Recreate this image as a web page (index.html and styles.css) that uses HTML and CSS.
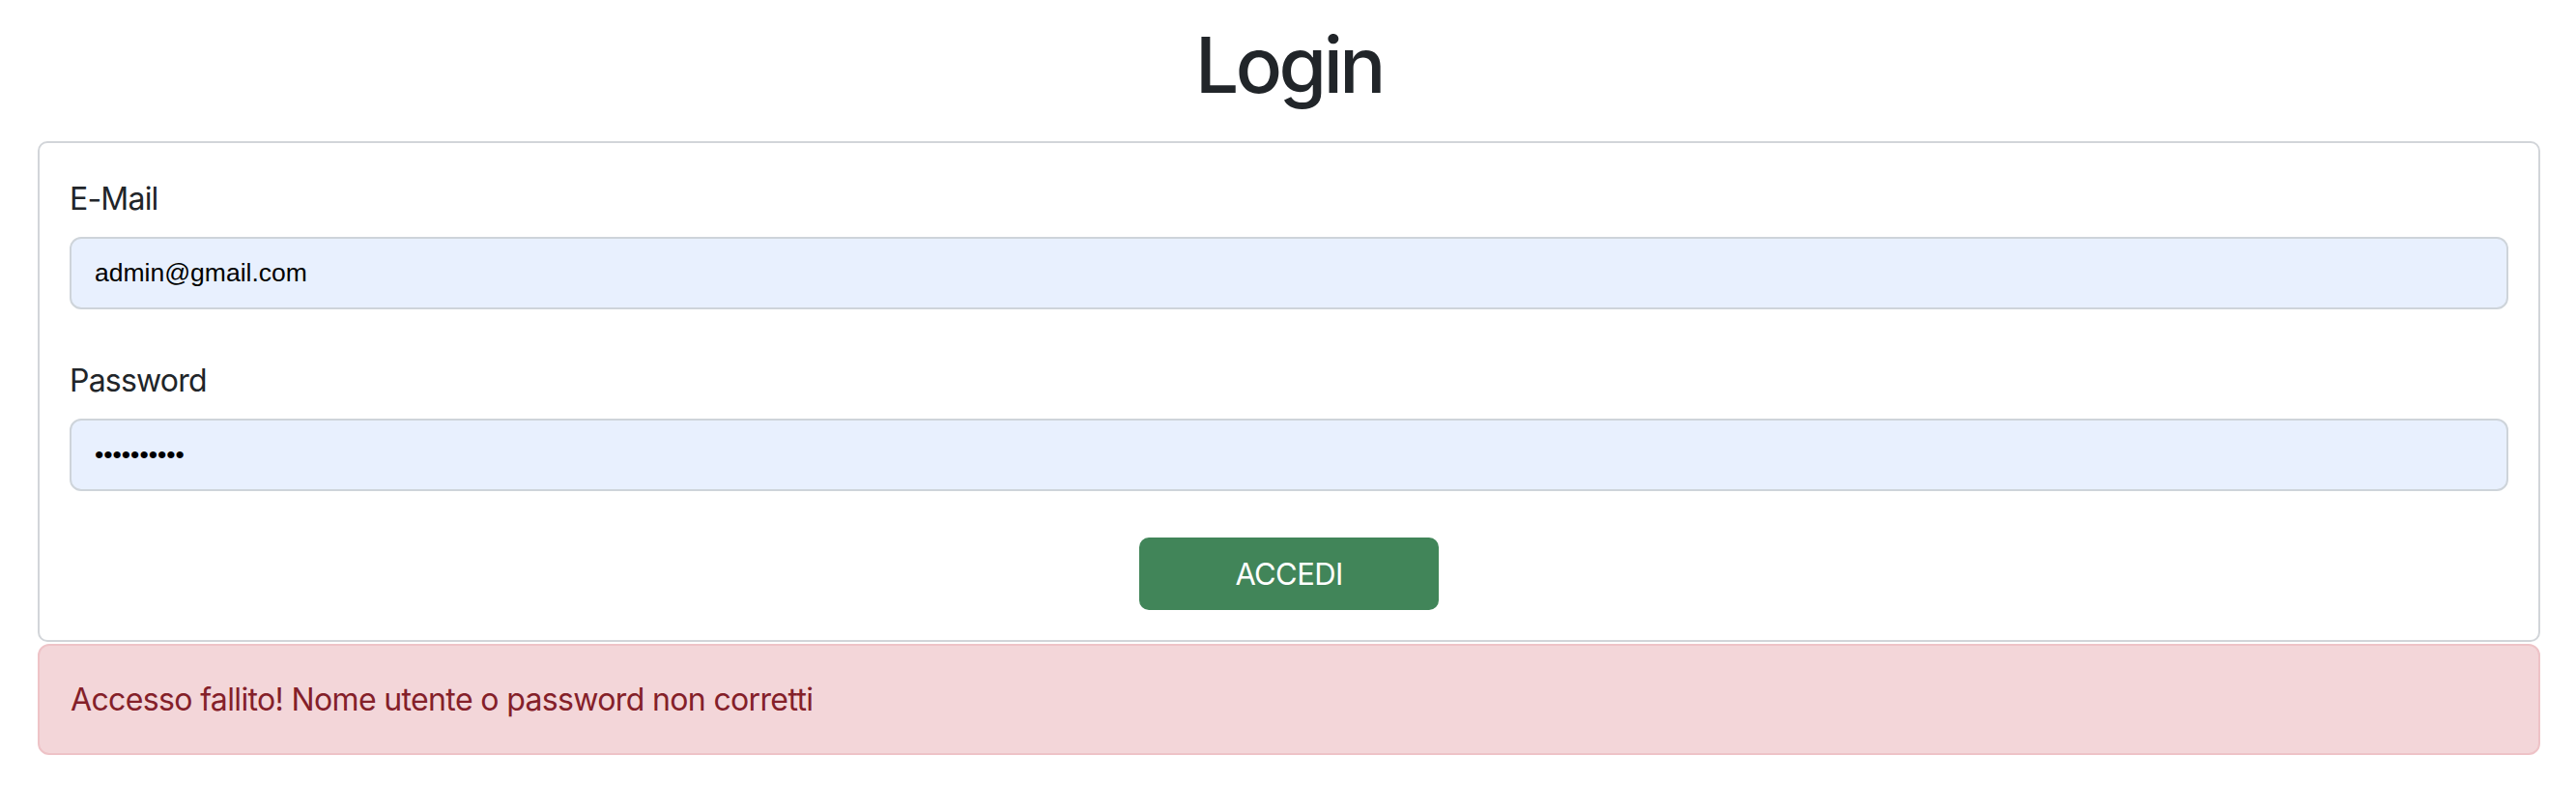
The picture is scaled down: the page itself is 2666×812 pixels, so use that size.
FILE: index.html
```html
<!DOCTYPE html>
<html lang="it">
<head>
<meta charset="utf-8">
<title>Login</title>
<link rel="stylesheet" href="styles.css">
</head>
<body>
<main class="page">
  <h1 class="title">Login</h1>
  <form class="card">
    <div class="field">
      <label class="label" for="email">E-Mail</label>
      <input class="control" id="email" type="text" value="admin@gmail.com">
    </div>
    <div class="field">
      <label class="label" for="pwd">Password</label>
      <input class="control" id="pwd" type="password" value="adminadmin">
    </div>
    <div class="actions">
      <button class="btn" type="button">ACCEDI</button>
    </div>
  </form>
  <div class="alert">Accesso fallito! Nome utente o password non corretti</div>
</main>
</body>
</html>
```

FILE: styles.css
```css
html, body {
  margin: 0;
  background: #ffffff;
}

.page {
  padding: 19px 37px 0 39px;
  font-family: Inter, "Noto Sans", sans-serif;
  color: #212529;
}

.title {
  margin: 0 0 31px;
  font-size: 80px;
  line-height: 96px;
  font-weight: 500;
  text-align: center;
  letter-spacing: -3.5px;
}

.card {
  display: flex;
  flex-direction: column;
  gap: 48px;
  border: 2px solid #d2d5d9;
  border-radius: 10px;
  padding: 32px 31px 31px;
  margin: 0;
}

.field {
  display: flex;
  flex-direction: column;
  gap: 15px;
}

.label {
  padding-top: 2px;
  font-size: 32px;
  line-height: 48px;
  font-weight: 400;
  letter-spacing: -0.025em;
  color: #212529;
}

.control {
  box-sizing: border-box;
  height: 75px;
  width: 100%;
  margin: 0;
  padding: 0 24px;
  border: 2px solid #ced4da;
  border-radius: 12px;
  background: #e8f0fe;
  font-family: "Liberation Sans", Arial, sans-serif;
  font-size: 26.5px;
  color: #000000;
  outline: none;
}

.actions {
  display: flex;
  justify-content: center;
}

.btn {
  width: 310px;
  height: 75px;
  border: 0;
  border-radius: 10px;
  background: #418559;
  color: #ffffff;
  font-family: Inter, "Noto Sans", sans-serif;
  font-size: 31px;
  font-weight: 400;
  letter-spacing: -0.02em;
  padding: 0;
}

.alert {
  margin-top: 2px;
  border: 2px solid #eec3c7;
  border-radius: 12px;
  background: #f3d6d9;
  color: #842029;
  padding: 32px 32px 31px;
  font-size: 32px;
  line-height: 48px;
  letter-spacing: -0.02em;
}
```
